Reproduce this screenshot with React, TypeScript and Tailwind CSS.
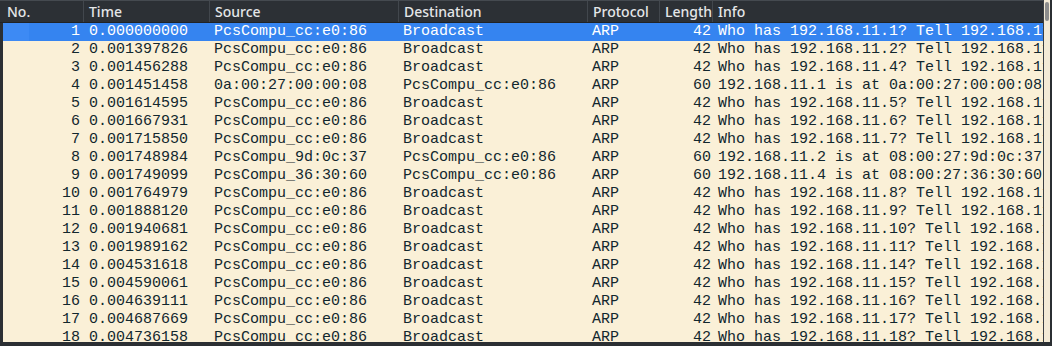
import React from "react";

type Row = { no: number; time: string; src: string; dst: string; proto: string; len: number; info: string };

const who = (n: number) => `Who has 192.168.11.${n}? Tell 192.168.11.3`;

const rows: Row[] = [
  { no: 1, time: "0.000000000", src: "PcsCompu_cc:e0:86", dst: "Broadcast", proto: "ARP", len: 42, info: who(1) },
  { no: 2, time: "0.001397826", src: "PcsCompu_cc:e0:86", dst: "Broadcast", proto: "ARP", len: 42, info: who(2) },
  { no: 3, time: "0.001456288", src: "PcsCompu_cc:e0:86", dst: "Broadcast", proto: "ARP", len: 42, info: who(4) },
  { no: 4, time: "0.001451458", src: "0a:00:27:00:00:08", dst: "PcsCompu_cc:e0:86", proto: "ARP", len: 60, info: "192.168.11.1 is at 0a:00:27:00:00:08" },
  { no: 5, time: "0.001614595", src: "PcsCompu_cc:e0:86", dst: "Broadcast", proto: "ARP", len: 42, info: who(5) },
  { no: 6, time: "0.001667931", src: "PcsCompu_cc:e0:86", dst: "Broadcast", proto: "ARP", len: 42, info: who(6) },
  { no: 7, time: "0.001715850", src: "PcsCompu_cc:e0:86", dst: "Broadcast", proto: "ARP", len: 42, info: who(7) },
  { no: 8, time: "0.001748984", src: "PcsCompu_9d:0c:37", dst: "PcsCompu_cc:e0:86", proto: "ARP", len: 60, info: "192.168.11.2 is at 08:00:27:9d:0c:37" },
  { no: 9, time: "0.001749099", src: "PcsCompu_36:30:60", dst: "PcsCompu_cc:e0:86", proto: "ARP", len: 60, info: "192.168.11.4 is at 08:00:27:36:30:60" },
  { no: 10, time: "0.001764979", src: "PcsCompu_cc:e0:86", dst: "Broadcast", proto: "ARP", len: 42, info: who(8) },
  { no: 11, time: "0.001888120", src: "PcsCompu_cc:e0:86", dst: "Broadcast", proto: "ARP", len: 42, info: who(9) },
  { no: 12, time: "0.001940681", src: "PcsCompu_cc:e0:86", dst: "Broadcast", proto: "ARP", len: 42, info: who(10) },
  { no: 13, time: "0.001989162", src: "PcsCompu_cc:e0:86", dst: "Broadcast", proto: "ARP", len: 42, info: who(11) },
  { no: 14, time: "0.004531618", src: "PcsCompu_cc:e0:86", dst: "Broadcast", proto: "ARP", len: 42, info: who(14) },
  { no: 15, time: "0.004590061", src: "PcsCompu_cc:e0:86", dst: "Broadcast", proto: "ARP", len: 42, info: who(15) },
  { no: 16, time: "0.004639111", src: "PcsCompu_cc:e0:86", dst: "Broadcast", proto: "ARP", len: 42, info: who(16) },
  { no: 17, time: "0.004687669", src: "PcsCompu_cc:e0:86", dst: "Broadcast", proto: "ARP", len: 42, info: who(17) },
  { no: 18, time: "0.004736158", src: "PcsCompu_cc:e0:86", dst: "Broadcast", proto: "ARP", len: 42, info: who(18) },
];

const mono = { fontFamily: '"Liberation Mono", "DejaVu Sans Mono", monospace' };

function HeaderCell({ label, w, last }: { label: string; w: string; last?: boolean }) {
  return (
    <div
      className={`${w} shrink-0 h-full flex items-center pl-[5px] overflow-hidden whitespace-nowrap ${last ? "flex-1" : "border-r border-[#42474d]"}`}
    >
      {label}
    </div>
  );
}

export default function App() {
  return (
    <div className="w-[1052px] h-[346px] bg-[#2b2f33] flex flex-col overflow-hidden">
      <div className="flex h-[342px] min-h-0">
        <div className="flex flex-col w-[1043px] min-w-0">
          {/* header */}
          <div
            className="h-[23px] shrink-0 flex border-t border-[#454a50] border-b border-b-[#202326] bg-[#2c3035] text-[#e4e6e8] text-[14px] font-medium"
            style={{ fontFamily: '"Noto Sans", "Open Sans", sans-serif' }}
          >
            <div className="w-[84px] shrink-0 h-full flex items-center pl-[7px] border-r border-[#42474d]">No.</div>
            <HeaderCell label="Time" w="w-[126px]" />
            <HeaderCell label="Source" w="w-[189px]" />
            <HeaderCell label="Destination" w="w-[189px]" />
            <HeaderCell label="Protocol" w="w-[72px]" />
            <HeaderCell label="Length" w="w-[53px]" />
            <HeaderCell label="Info" w="w-[330px]" last />
          </div>
          {/* body */}
          <div className="flex-1 min-h-0 overflow-hidden pl-[3px] bg-[#2b2f33]">
            {rows.map((r) => {
              const sel = r.no === 1;
              return (
                <div
                  key={r.no}
                  className={`h-[18px] flex items-center text-[15px] leading-[18px] whitespace-nowrap ${sel ? "bg-[#3584f0] text-white" : "bg-[#faf0d7] text-[#12272e]"}`}
                  style={mono}
                >
                  <div className={`w-[81px] shrink-0 h-full flex ${sel ? "" : ""}`}>
                    <div className={`w-[26px] h-full ${sel ? "bg-[#3d8af4]" : ""}`} />
                    <div className="flex-1 text-right pr-[4px]">{r.no}</div>
                  </div>
                  <div className="w-[126px] shrink-0 pl-[5px] overflow-hidden">{r.time}</div>
                  <div className="w-[189px] shrink-0 pl-[4px] overflow-hidden">{r.src}</div>
                  <div className="w-[189px] shrink-0 pl-[4px] overflow-hidden">{r.dst}</div>
                  <div className="w-[72px] shrink-0 pl-[4px] overflow-hidden">{r.proto}</div>
                  <div className="w-[53px] shrink-0 text-right pr-[2px] overflow-hidden">{r.len}</div>
                  <div className="flex-1 min-w-0 pl-[5px] overflow-hidden">{r.info}</div>
                </div>
              );
            })}
          </div>
        </div>
        {/* vertical scrollbar */}
        <div className="w-[7px] shrink-0 h-full bg-[#f3ead6] border-l border-[#3a3e43] flex flex-col">
          <div className="h-[2px]" />
          <div className="mx-[1px] h-[19px] rounded-[2px] bg-[#8c8c8c]" />
        </div>
        <div className="flex-1 bg-[#2b2f33]" />
      </div>
      <div className="flex-1 bg-[#2b2f33]" />
    </div>
  );
}
